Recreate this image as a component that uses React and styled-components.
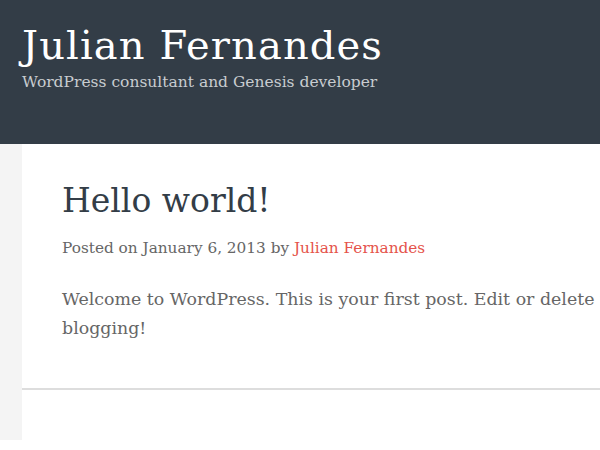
import React from "react";
import styled, { createGlobalStyle } from "styled-components";

const Global = createGlobalStyle`
  html, body { margin: 0; padding: 0; background: #fff; }
  body { font-family: "DejaVu Serif", "Liberation Serif", serif; overflow: hidden; }
`;

const Header = styled.header`
  background: #333d47;
  height: 144px;
  box-sizing: border-box;
  padding: 20px 22px 0;
`;

const SiteTitle = styled.h1`
  margin: 0;
  font-size: 40px;
  font-weight: 300;
  letter-spacing: 1.1px;
  line-height: 50px;
  color: #fff;
  white-space: nowrap;
`;

const Tagline = styled.p`
  margin: 0;
  font-size: 15.5px;
  line-height: 24px;
  color: #c8ccd0;
  white-space: nowrap;
`;

const Layout = styled.div`
  display: flex;
  height: 296px;
  background: #f4f4f4;
`;

const Content = styled.main`
  margin-left: 22px;
  flex: 1;
  min-width: 0;
  background: #fff;
  display: flex;
  flex-direction: column;
  overflow: hidden;
`;

const Entry = styled.article`
  padding: 35px 0 0 40px;
  height: 246px;
  box-sizing: border-box;
  border-bottom: 2px solid #dddddd;
  overflow: hidden;
`;

const EntryTitle = styled.h2`
  margin: 0;
  font-size: 33px;
  font-weight: 400;
  line-height: 44px;
  color: #333d47;
  white-space: nowrap;
`;

const Meta = styled.p`
  margin: 13px 0 0;
  font-size: 15.3px;
  line-height: 24px;
  color: #666;
  white-space: nowrap;
`;

const Author = styled.a`
  color: #e5534b;
  text-decoration: none;
`;

const Body = styled.p`
  margin: 25px 0 0;
  font-size: 17.4px;
  line-height: 29px;
  color: #666;
  white-space: nowrap;
`;

export default function App() {
  return (
    <>
      <Global />
      <Header>
        <SiteTitle>Julian Fernandes</SiteTitle>
        <Tagline>WordPress consultant and Genesis developer</Tagline>
      </Header>
      <Layout>
        <Content>
          <Entry>
            <EntryTitle>Hello world!</EntryTitle>
            <Meta>
              Posted on January 6, 2013 by <Author href="#">Julian Fernandes</Author>
            </Meta>
            <Body>
              Welcome to WordPress. This is your first post. Edit or delete it, then start
              <br />
              blogging!
            </Body>
          </Entry>
        </Content>
      </Layout>
    </>
  );
}
